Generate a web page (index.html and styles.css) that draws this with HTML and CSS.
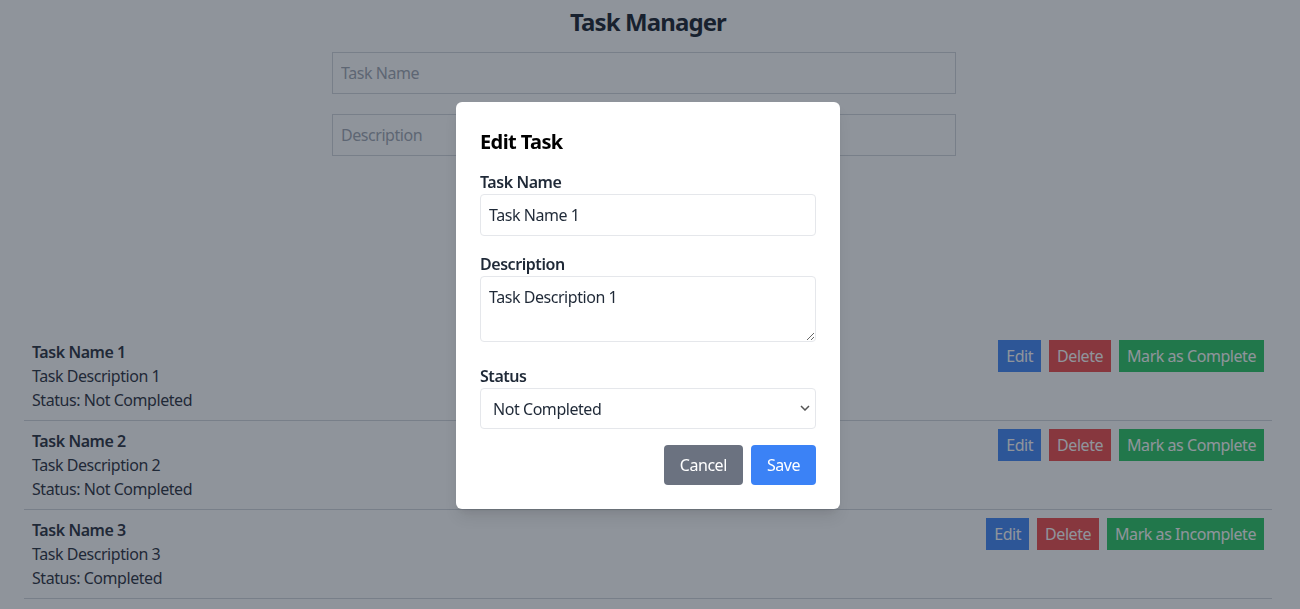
FILE: index.html
```html
<!DOCTYPE html>
<html lang="en">
<head>
<meta charset="utf-8">
<title>Task Manager</title>
<link rel="stylesheet" href="styles.css">
</head>
<body>
<div class="container">
  <h1 class="title">Task Manager</h1>
  <form class="add-form">
    <input class="field" type="text" placeholder="Task Name">
    <input class="field" type="text" placeholder="Description">
  </form>
  <ul class="task-list">
    <li class="task">
      <div class="task-info">
        <div class="task-name">Task Name 1</div>
        <div>Task Description 1</div>
        <div>Status: Not Completed</div>
      </div>
      <div class="task-actions">
        <button class="btn btn-blue">Edit</button>
        <button class="btn btn-red">Delete</button>
        <button class="btn btn-green">Mark as Complete</button>
      </div>
    </li>
    <li class="task">
      <div class="task-info">
        <div class="task-name">Task Name 2</div>
        <div>Task Description 2</div>
        <div>Status: Not Completed</div>
      </div>
      <div class="task-actions">
        <button class="btn btn-blue">Edit</button>
        <button class="btn btn-red">Delete</button>
        <button class="btn btn-green">Mark as Complete</button>
      </div>
    </li>
    <li class="task">
      <div class="task-info">
        <div class="task-name">Task Name 3</div>
        <div>Task Description 3</div>
        <div>Status: Completed</div>
      </div>
      <div class="task-actions">
        <button class="btn btn-blue">Edit</button>
        <button class="btn btn-red">Delete</button>
        <button class="btn btn-green">Mark as Incomplete</button>
      </div>
    </li>
  </ul>
</div>

<div class="overlay">
  <div class="modal">
    <h2 class="modal-title">Edit Task</h2>
    <label class="label">Task Name</label>
    <input class="m-input" type="text" value="Task Name 1">
    <label class="label">Description</label>
    <textarea class="m-input m-textarea" rows="2">Task Description 1</textarea>
    <label class="label">Status</label>
    <div class="select-wrap">
      <select class="m-input m-select">
        <option>Not Completed</option>
        <option>Completed</option>
      </select>
      <svg class="chevron" width="10" height="6" viewBox="0 0 10 6"><path d="M1 1l4 4 4-4" fill="none" stroke="#555" stroke-width="1.5"/></svg>
    </div>
    <div class="modal-actions">
      <button class="mbtn mbtn-gray">Cancel</button>
      <button class="mbtn mbtn-blue">Save</button>
    </div>
  </div>
</div>
</body>
</html>
```
FILE: styles.css
```css
* { box-sizing: border-box; }
html, body { margin: 0; padding: 0; }
body {
  font-family: "Noto Sans", "Open Sans", sans-serif;
  font-size: 16px;
  line-height: 24px;
  letter-spacing: -0.45px;
  color: #1f2937;
  background: #fff;
  overflow: hidden;
}
.container {
  width: 1248px;
  margin-left: 24px;
}
.title {
  margin: 0;
  padding-top: 6px;
  font-size: 24px;
  line-height: 32px;
  font-weight: 700;
  letter-spacing: -0.9px;
  text-align: center;
  color: #111827;
}
.add-form {
  margin-top: 14px;
  margin-left: 308px;
  width: 624px;
  display: flex;
  flex-direction: column;
  gap: 20px;
}
.field {
  height: 42px;
  border: 1px solid #d1d5db;
  padding: 8px;
  font: inherit;
  letter-spacing: inherit;
  color: #111;
  background: #fff;
}
.field::placeholder { color: #9ca3af; }
.task-list {
  list-style: none;
  margin: 176px 0 0;
  padding: 0;
}
.task {
  display: flex;
  justify-content: space-between;
  align-items: flex-start;
  padding: 8px;
  border-bottom: 1px solid #d1d5db;
}
.task-name { font-weight: 600; }
.task-actions { display: flex; gap: 8px; }
.btn {
  border: 0;
  padding: 4px 8px;
  font: inherit;
  letter-spacing: inherit;
  line-height: 24px;
  color: #fff;
}
.btn-blue { background: #3b82f6; }
.btn-red { background: #ef4444; }
.btn-green { background: #22c55e; }

.overlay {
  position: fixed;
  inset: 0;
  background: rgba(31, 41, 55, 0.5);
  display: flex;
  align-items: center;
  justify-content: center;
}
.modal {
  width: 384px;
  background: #fff;
  border-radius: 6px;
  padding: 24px;
  box-shadow: 0 10px 15px -3px rgba(0,0,0,0.1), 0 4px 6px -4px rgba(0,0,0,0.1);
  display: flex;
  flex-direction: column;
  margin-left: -4px;
  margin-top: 2px;
}
.modal-title {
  margin: 0 0 14px;
  padding-top: 2px;
  font-size: 20px;
  line-height: 28px;
  font-weight: 700;
  letter-spacing: -0.6px;
  color: #000;
}
.label {
  display: block;
  font-weight: 600;
  color: #1f2937;
}
.m-input {
  display: block;
  width: 100%;
  border: 1px solid #e5e7eb;
  border-radius: 4px;
  padding: 8px;
  font: inherit;
  letter-spacing: inherit;
  line-height: 24px;
  color: #1f2937;
  background: #fff;
  margin-bottom: 16px;
}
input.m-input { height: 42px; }
.m-textarea { height: 66px; margin-bottom: 22px; }
.select-wrap { position: relative; }
.m-select {
  appearance: none;
  -webkit-appearance: none;
  height: 41px;
  padding: 8px 12px;
}
.chevron {
  position: absolute;
  right: 6px;
  top: 17px;
}
.modal-actions {
  display: flex;
  justify-content: flex-end;
  gap: 8px;
}
.mbtn {
  border: 0;
  border-radius: 4px;
  padding: 8px 16px;
  font: inherit;
  letter-spacing: inherit;
  line-height: 24px;
  color: #fff;
}
.mbtn-gray { background: #6b7280; }
.mbtn-blue { background: #3b82f6; }
```
